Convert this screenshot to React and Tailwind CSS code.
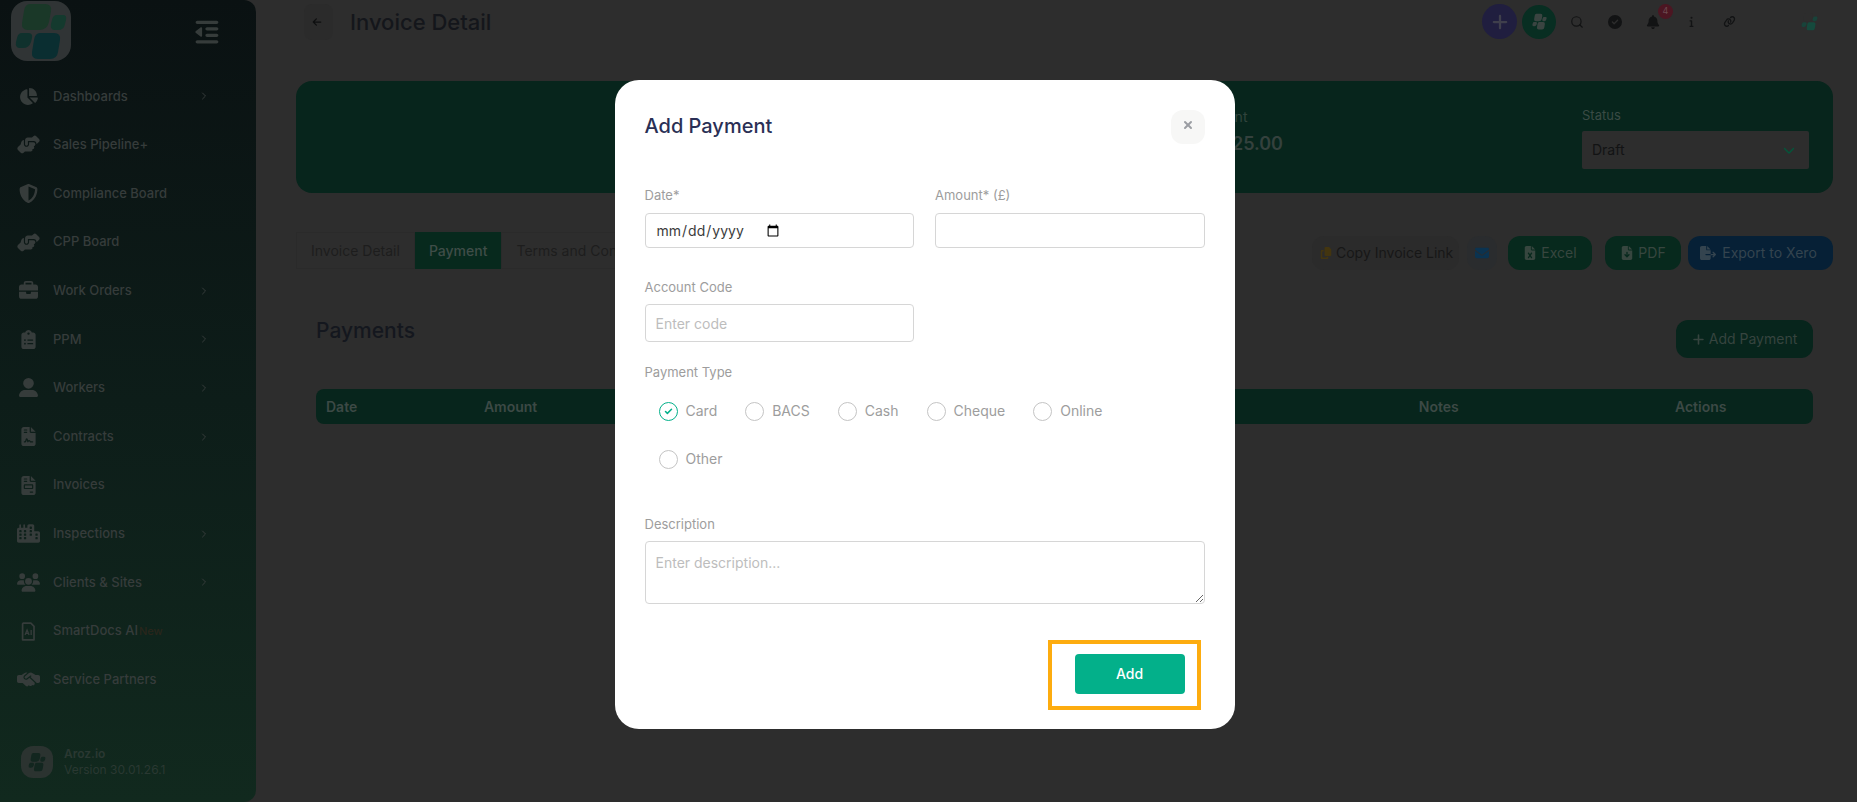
import React from "react";
import {
  FaArrowLeft,
  FaBell,
  FaBriefcase,
  FaChartPie,
  FaChevronDown,
  FaCircleCheck,
  FaCity,
  FaClipboardList,
  FaCopy,
  FaEnvelope,
  FaFileContract,
  FaFileExcel,
  FaFileExport,
  FaFileArrowDown,
  FaFileInvoice,
  FaHandshakeAngle,
  FaHandshakeSimple,
  FaInfo,
  FaLink,
  FaOutdent,
  FaPlus,
  FaShieldHalved,
  FaUserLarge,
  FaUsers,
} from "react-icons/fa6";
import { Check, ChevronRight, Search, X } from "lucide-react";

function BrandMark({ className, colors }) {
  const [a, b, c, d] = colors;
  return (
    <svg viewBox="0 0 60 60" className={className} aria-hidden="true">
      <path d="M19 3h15q7 0 6 7l-2 11q-2 8-10 8H17q-7 0-6-7l2-12q1-7 6-7z" fill={a} />
      <path d="M46 14h6q4 0 3 5l-1 4q-1 6-7 6h-3q-5 0-4-6l1-4q1-5 5-5z" fill={b} />
      <path d="M11 32h6q5 0 4 5l-1 4q-2 6-8 6H9q-5 0-4-6l1-4q1-5 5-5z" fill={c} />
      <path d="M29 32h14q7 0 6 7l-2 12q-1 7-8 7H27q-7 0-6-7l2-12q1-7 6-7z" fill={d} />
    </svg>
  );
}

function AiDocIcon({ className }) {
  return (
    <svg viewBox="0 0 16 20" className={className} fill="none" stroke="currentColor" aria-hidden="true">
      <path d="M2.5 1.2h8l3.3 3.3v14.3H1.8V2z" strokeWidth="1.8" strokeLinejoin="round" />
      <path d="M4.4 13.8l2.1-5.3 2.1 5.3M5.2 12h2.8M10.8 8.5v5.3" strokeWidth="1.4" />
    </svg>
  );
}

const items = [
  { label: "Dashboards", Icon: FaChartPie, more: true },
  { label: "Sales Pipeline+", Icon: FaHandshakeAngle, wide: true },
  { label: "Compliance Board", Icon: FaShieldHalved },
  { label: "CPP Board", Icon: FaHandshakeAngle, wide: true },
  { label: "Work Orders", Icon: FaBriefcase, more: true },
  { label: "PPM", Icon: FaClipboardList, more: true },
  { label: "Workers", Icon: FaUserLarge, more: true },
  { label: "Contracts", Icon: FaFileContract, more: true },
  { label: "Invoices", Icon: FaFileInvoice },
  { label: "Inspections", Icon: FaCity, more: true, wide: true },
  { label: "Clients & Sites", Icon: FaUsers, more: true, wide: true },
  { label: "SmartDocs AI", Icon: AiDocIcon, tag: "New" },
  { label: "Service Partners", Icon: FaHandshakeSimple, wide: true },
];

function Sidebar() {
  return (
    <aside className="flex w-64 shrink-0 flex-col rounded-r-xl bg-linear-to-b from-[#0a1112] via-[#0d1d19] to-[#11291e] text-[#363c3b]">
      <div className="flex items-start justify-between pt-px pr-9 pl-[11px]">
        <span className="flex size-15 items-center justify-center rounded-2xl bg-[#303435]">
          <BrandMark className="size-15" colors={["#1a3828", "#143a2e", "#0f312d", "#0a2e31"]} />
        </span>
        <button type="button" aria-label="Collapse menu" className="mt-[18px]">
          <FaOutdent className="size-[26px]" />
        </button>
      </div>
      <nav className="mt-[11px] flex flex-1 flex-col">
        {items.map(({ label, Icon, more, tag, wide }) => (
          <a key={label} href="#" className="flex flex-1 items-center pr-[46px] pl-4 text-[13px] font-medium">
            <span className="mr-3 flex w-[25px] justify-center">
              <Icon className={wide ? "size-[23px]" : "size-[19px]"} />
            </span>
            {label}
            {tag && <span className="ml-px text-[11px] text-[#2a261b]">{tag}</span>}
            {more && <ChevronRight className="ml-auto size-3" />}
          </a>
        ))}
      </nav>
      <div className="flex items-center gap-[11px] pt-[42px] pb-6 pl-[21px]">
        <span className="flex size-8 items-center justify-center rounded-xl bg-[#2b3330]">
          <BrandMark className="size-5" colors={["#12261f", "#12261f", "#12261f", "#12261f"]} />
        </span>
        <div className="text-xs leading-4 text-[#2a3832]">
          <p className="font-semibold">Aroz.io</p>
          <p>Version 30.01.26.1</p>
        </div>
      </div>
    </aside>
  );
}

function TopBar() {
  const icon = "flex h-[34px] w-[38px] items-center justify-center text-[#121314]";
  return (
    <header className="flex items-start justify-between pt-1 pl-2">
      <div className="flex items-center gap-[17px]">
        <button type="button" aria-label="Back" className="flex h-9 w-[29px] items-center justify-center rounded-lg bg-[#2b2b2b] pr-1 text-[#0e0f10]">
          <FaArrowLeft className="size-[10px]" />
        </button>
        <h1 className="text-[22px] leading-9 font-medium text-[#14161b]">Invoice Detail</h1>
      </div>
      <div className="flex items-center">
        <button type="button" aria-label="Create" className="flex size-[35px] items-center justify-center rounded-full bg-[#201e3f] text-[#3f3f4c]">
          <FaPlus className="size-[18px]" />
        </button>
        <button type="button" aria-label="Apps" className="ml-[5px] flex size-[34px] items-center justify-center rounded-full bg-[#082e22]">
          <BrandMark className="size-[17px]" colors={["#3a4441", "#3a4441", "#3a4441", "#3a4441"]} />
        </button>
        <button type="button" aria-label="Search" className={`${icon} ml-[2px]`}>
          <Search className="size-[14px]" />
        </button>
        <button type="button" aria-label="Approvals" className={icon}>
          <FaCircleCheck className="size-[14px]" />
        </button>
        <button type="button" aria-label="Notifications" className={`${icon} relative`}>
          <FaBell className="size-[14px]" />
          <span className="absolute -top-px -right-px flex size-[15px] items-center justify-center rounded-full bg-[#4c1622] text-[9px] text-[#6b4a50]">4</span>
        </button>
        <button type="button" aria-label="Information" className={icon}>
          <FaInfo className="size-[11px]" />
        </button>
        <button type="button" aria-label="Links" className={icon}>
          <FaLink className="size-[13px] -rotate-12" />
        </button>
        <button type="button" aria-label="Account" className="ml-[37px] flex h-[34px] w-12 items-center justify-center">
          <BrandMark className="size-[19px]" colors={["#2d2d2d", "#18433a", "#18433a", "#154a3d"]} />
        </button>
      </div>
    </header>
  );
}

function Summary() {
  return (
    <section className="mt-[41px] flex h-28 items-start justify-end gap-[299px] rounded-2xl bg-[#07251c] pr-6">
      <div className="pt-[27px] text-[#31443d]">
        <p className="text-sm leading-[18px]">Amount</p>
        <p className="mt-1 text-lg leading-7 font-semibold text-[#34413d]">£1,225.00</p>
      </div>
      <div className="w-[227px] pt-[25px]">
        <label htmlFor="status" className="block text-[13px] leading-[18px] text-[#3a4b45]">
          Status
        </label>
        <div className="relative mt-[7px]">
          <select id="status" className="h-[38px] w-full appearance-none rounded-xs bg-[#2d2d2d] pl-[10px] text-sm text-[#121314]">
            <option>Draft</option>
          </select>
          <FaChevronDown className="pointer-events-none absolute top-[13px] right-[14px] size-3 text-[#05543a]" />
        </div>
      </div>
    </section>
  );
}

function Toolbar() {
  const tab = "flex h-[37px] items-center px-[14px] text-sm whitespace-nowrap";
  const green = "flex h-[34px] items-center gap-1 rounded-xl bg-[#07291d] text-sm text-[#37463f]";
  return (
    <div className="mt-[39px] flex items-start justify-between">
      <div className="flex" role="tablist">
        <button type="button" role="tab" className={`${tab} border border-[#2a2a2a] text-[#1d1d1d]`}>Invoice Detail</button>
        <button type="button" role="tab" aria-selected="true" className={`${tab} bg-[#07291d] font-medium text-[#3f4d48]`}>Payment</button>
        <button type="button" role="tab" className={`${tab} border border-[#2a2a2a] text-[#1d1d1d]`}>Terms and Conditions</button>
      </div>
      <div className="mt-1 flex">
        <button type="button" className="flex h-[34px] w-[147px] items-center gap-1 rounded-xl bg-[#2b2b2b] pl-2 text-sm whitespace-nowrap text-[#171717]">
          <FaCopy className="size-3 text-[#43350f]" />
          Copy Invoice Link
        </button>
        <button type="button" aria-label="Email invoice" className="ml-2 flex h-[34px] w-[30px] items-center justify-center rounded-xl bg-[#2a2c2e] text-[#0b3350]">
          <FaEnvelope className="size-[14px]" />
        </button>
        <button type="button" className={`${green} ml-[11px] w-[84px] justify-center`}>
          <FaFileExcel className="size-[14px]" />
          Excel
        </button>
        <button type="button" className={`${green} ml-[13px] w-[76px] justify-center`}>
          <FaFileArrowDown className="size-[14px]" />
          PDF
        </button>
        <button type="button" className="ml-[7px] flex h-[34px] w-[145px] items-center justify-center gap-1.5 rounded-xl bg-[#062036] pr-1 text-sm text-[#34444f]">
          <FaFileExport className="size-4" />
          Export to Xero
        </button>
      </div>
    </div>
  );
}

function Payments() {
  return (
    <section className="mt-[49px] px-5">
      <div className="flex items-start justify-between">
        <h2 className="text-[21px] leading-6 font-medium text-[#14171e]">Payments</h2>
        <button type="button" className="mt-px flex h-[38px] w-[137px] items-center justify-center gap-1 rounded-xl bg-[#07251c] text-sm text-[#36443f]">
          <FaPlus className="size-[13px]" />
          Add Payment
        </button>
      </div>
      <table className="mt-[31px] w-full table-fixed overflow-hidden rounded-lg bg-[#07251c] text-sm text-[#3c4945]">
        <thead>
          <tr className="h-[35px]">
            <th className="w-[8%] pl-[10px] text-left font-semibold">Date</th>
            <th className="w-[10%] font-semibold">Amount</th>
            <th className="w-[47%]" />
            <th className="w-[20%] font-semibold">Notes</th>
            <th className="w-[15%] font-semibold">Actions</th>
          </tr>
        </thead>
      </table>
    </section>
  );
}

const field = "block w-full rounded-sm border border-[#d6d6d6] bg-white text-sm outline-none placeholder:text-[#bdbdbd]";
const caption = "block text-[13px] leading-4 text-[#9d9d9d]";

function PaymentType({ label, checked }) {
  return (
    <label className="flex h-5 items-center gap-2 text-sm text-[#9d9d9d]">
      <span className="grid place-items-center">
        <input
          type="radio"
          name="type"
          defaultChecked={checked}
          className="peer col-start-1 row-start-1 size-[19px] appearance-none rounded-full border border-[#c4c4c4] checked:border-[#03b08a]"
        />
        <Check className="invisible col-start-1 row-start-1 size-[9px] text-[#03b08a] peer-checked:visible" strokeWidth={4} />
      </span>
      {label}
    </label>
  );
}

function AddPaymentDialog() {
  return (
    <div className="fixed inset-0 flex items-start justify-center overflow-auto pt-20 pr-2">
      <form
        role="dialog"
        aria-labelledby="dialog-title"
        onSubmit={(e) => e.preventDefault()}
        className="w-[620px] rounded-3xl bg-white px-[30px] pt-[30px] pb-[19px]"
      >
        <div className="flex items-start justify-between">
          <h2 id="dialog-title" className="text-xl leading-8 font-medium text-[#2a2f55]">Add Payment</h2>
          <button type="button" aria-label="Close" className="flex size-[34px] items-center justify-center rounded-xl bg-[#f7f7f6] pb-1 text-[#9b9ea3]">
            <X className="size-3" strokeWidth={4} />
          </button>
        </div>

        <div className="mt-[43px] grid grid-cols-2 gap-x-[21px]">
          <div>
            <label htmlFor="date" className={caption}>Date*</label>
            <input
              id="date"
              type="date"
              className={`${field} mt-[10px] h-[35px] px-[10px] text-[#3c3c3c] [&::-webkit-calendar-picker-indicator]:ml-0 [&::-webkit-datetime-edit]:flex-none`}
            />
          </div>
          <div>
            <label htmlFor="amount" className={caption}>Amount* (£)</label>
            <input id="amount" type="text" className={`${field} mt-[10px] h-[35px] px-[10px]`} />
          </div>
          <div className="mt-[31px]">
            <label htmlFor="code" className={caption}>Account Code</label>
            <input id="code" type="text" placeholder="Enter code" className={`${field} mt-[9px] h-[38px] px-[10px]`} />
          </div>
        </div>

        <fieldset className="mt-[22px]">
          <legend className={caption}>Payment Type</legend>
          <div className="mt-[21px] flex flex-wrap gap-x-7 gap-y-7 pr-16 pl-[14px]">
            <PaymentType label="Card" checked />
            <PaymentType label="BACS" />
            <PaymentType label="Cash" />
            <PaymentType label="Cheque" />
            <PaymentType label="Online" />
            <PaymentType label="Other" />
          </div>
        </fieldset>

        <label htmlFor="description" className={`${caption} mt-[47px]`}>Description</label>
        <textarea id="description" placeholder="Enter description..." className={`${field} mt-[9px] h-[63px] px-[10px] py-[11px]`} />

        <div className="mt-9 mr-1 ml-auto flex h-[70px] w-[153px] items-center justify-end border-4 border-[#fdac0f] pr-3 pb-0.5">
          <button type="submit" className="h-10 w-[110px] rounded-sm bg-[#03b08a] text-sm font-medium text-white">Add</button>
        </div>
      </form>
    </div>
  );
}

export default function App() {
  return (
    <div className="flex min-h-screen bg-[#2d2d2d] font-['Inter',sans-serif]">
      <Sidebar />
      <main className="min-w-0 flex-1 pr-6 pl-10">
        <TopBar />
        <Summary />
        <Toolbar />
        <Payments />
      </main>
      <AddPaymentDialog />
    </div>
  );
}
